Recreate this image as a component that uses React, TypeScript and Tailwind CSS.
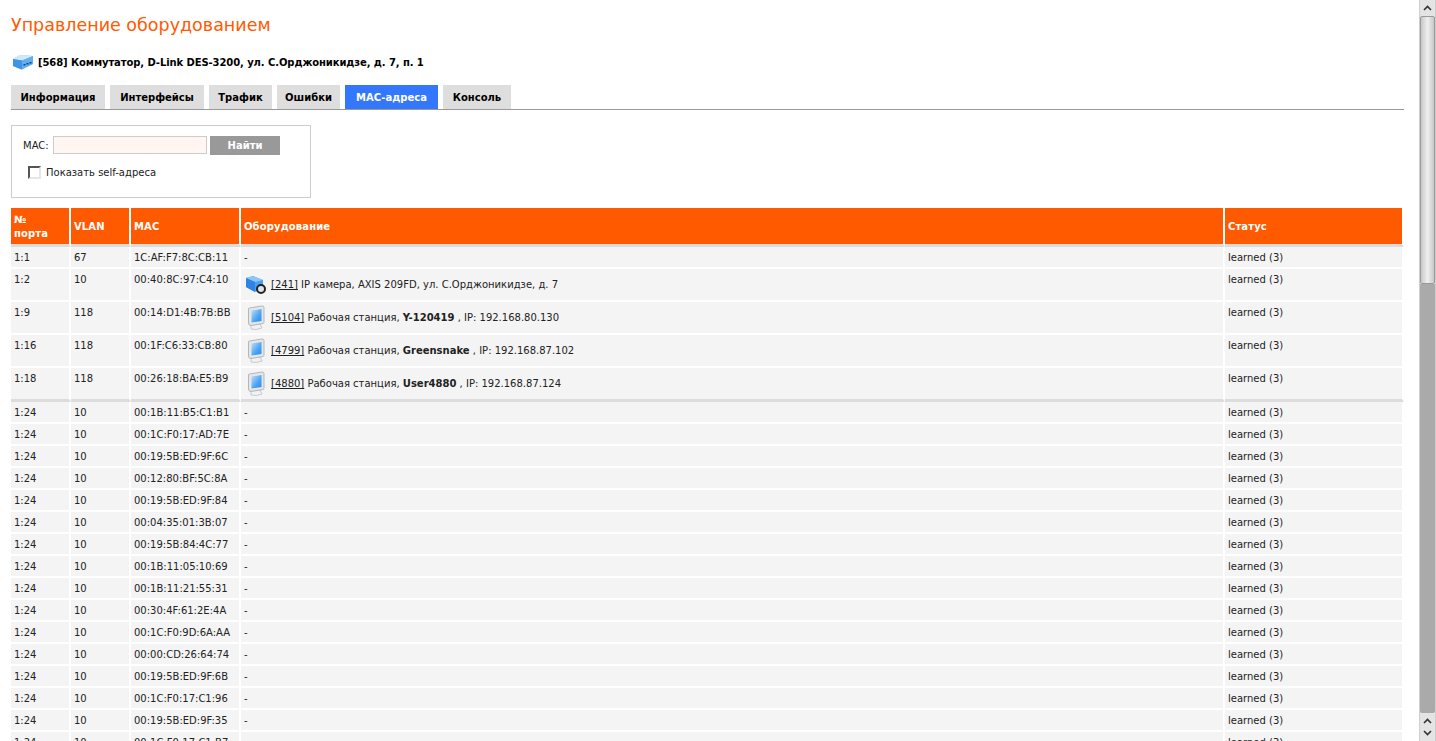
const font = "font-['DejaVu_Sans',sans-serif]"

type Row = { port: string; vlan: string; mac: string; device?: React.ReactNode; icon?: 'camera' | 'monitor'; tall?: boolean; sep?: boolean }

function SwitchIcon() {
  return (
    <svg width="22" height="16" viewBox="0 0 22 16" className="shrink-0">
      <path d="M1 5 L8 1 L21 2 L21 10 L9 15.5 L1 12 Z" fill="#7cc0f5" />
      <path d="M1 5 L8 1 L21 2 L10 6.5 Z" fill="#cfe9fc" />
      <path d="M10 6.5 L21 2 L21 10 L10 15.5 Z" fill="#62aeee" />
      <path d="M1 5 L10 6.5 L10 15.5 L1 12 Z" fill="#3f94e8" />
      <path d="M11.5 10 h2 v1.5 h-2 Z M14.5 9 h2 v1.5 h-2 Z M17.5 8 h2 v1.5 h-2 Z" fill="#1f3f68" />
    </svg>
  )
}

function CameraIcon() {
  return (
    <svg width="22" height="20" viewBox="0 0 22 20" className="shrink-0">
      <path d="M1 3 L8 1 L18 5 L18 13 L10 17 L1 12 Z" fill="#4f9ff0" />
      <path d="M1 3 L8 1 L18 5 L10 7 Z" fill="#8cc6f8" />
      <path d="M1 3 L10 7 L10 17 L1 12 Z" fill="#2f83e4" />
      <circle cx="16" cy="14" r="4" fill="#dfe3e6" stroke="#222" strokeWidth="2" />
    </svg>
  )
}

function MonitorIcon() {
  return (
    <svg width="20" height="26" viewBox="0 0 20 26" className="shrink-0">
      <defs>
        <linearGradient id="screen" x1="0" y1="0" x2="1" y2="1">
          <stop offset="0" stopColor="#bfe0fb" />
          <stop offset="0.6" stopColor="#4aa3f3" />
          <stop offset="1" stopColor="#2f8ae8" />
        </linearGradient>
      </defs>
      <path d="M5 19 L14 19 L16 23 Q10 25.5 5 24 Z" fill="#f0f1f2" stroke="#c8cbcd" />
      <path d="M2.5 4 Q2.5 3 3.5 3 L16 1 Q18 1 18 2.5 L18 17 Q18 18 17 18.5 L5 20.5 Q2.5 20.5 2.5 18 Z" fill="#e4e6e8" stroke="#b3b7ba" />
      <path d="M5.5 5.5 L15.5 4 L15.5 16 L5.5 17.5 Z" fill="url(#screen)" />
    </svg>
  )
}

function Scrollbar() {
  return (
    <div className="flex w-[17px] shrink-0 flex-col border-x border-x-[#cfcfcf] bg-[#e4e4e4]">
      <div className="flex h-[16px] items-center justify-center">
        <svg width="9" height="6" viewBox="0 0 9 6"><path d="M1 5 L4.5 1.5 L8 5" fill="none" stroke="#333" strokeWidth="1.6" /></svg>
      </div>
      <div className="h-[268px] rounded-[2px] border border-[#999] bg-gradient-to-r from-[#c8c8c8] via-[#efefef] to-[#c8c8c8]" />
      <div className="flex-1 rounded-b-[2px] bg-[#aaa]" />
      <div className="flex h-[16px] items-center justify-center">
        <svg width="9" height="6" viewBox="0 0 9 6"><path d="M1 5 L4.5 1.5 L8 5" fill="none" stroke="#333" strokeWidth="1.6" /></svg>
      </div>
      <div className="flex h-[12px] items-center justify-center pb-[4px]">
        <svg width="9" height="6" viewBox="0 0 9 6"><path d="M1 1 L4.5 4.5 L8 1" fill="none" stroke="#333" strokeWidth="1.6" /></svg>
      </div>
    </div>
  )
}

const rows: Row[] = [
  { port: '1:1', vlan: '67', mac: '1C:AF:F7:8C:CB:11' },
  { port: '1:2', vlan: '10', mac: '00:40:8C:97:C4:10', icon: 'camera', tall: true, device: <><u>[241]</u> IP камера, AXIS 209FD, ул. С.Орджоникидзе, д. 7</> },
  { port: '1:9', vlan: '118', mac: '00:14:D1:4B:7B:BB', icon: 'monitor', tall: true, device: <><u>[5104]</u> Рабочая станция, <b>Y-120419</b> , IP: 192.168.80.130</> },
  { port: '1:16', vlan: '118', mac: '00:1F:C6:33:CB:80', icon: 'monitor', tall: true, device: <><u>[4799]</u> Рабочая станция, <b>Greensnake</b> , IP: 192.168.87.102</> },
  { port: '1:18', vlan: '118', mac: '00:26:18:BA:E5:B9', icon: 'monitor', tall: true, sep: true, device: <><u>[4880]</u> Рабочая станция, <b>User4880</b> , IP: 192.168.87.124</> },
  ...[
    '00:1B:11:B5:C1:B1', '00:1C:F0:17:AD:7E', '00:19:5B:ED:9F:6C', '00:12:80:BF:5C:8A',
    '00:19:5B:ED:9F:84', '00:04:35:01:3B:07', '00:19:5B:84:4C:77', '00:1B:11:05:10:69',
    '00:1B:11:21:55:31', '00:30:4F:61:2E:4A', '00:1C:F0:9D:6A:AA', '00:00:CD:26:64:74',
    '00:19:5B:ED:9F:6B', '00:1C:F0:17:C1:96', '00:19:5B:ED:9F:35', '00:1C:F0:17:C1:B7',
  ].map((mac) => ({ port: '1:24', vlan: '10', mac })),
]

const tabs = ['Информация', 'Интерфейсы', 'Трафик', 'Ошибки', 'MAC-адреса', 'Консоль']
const tabWidths = ['w-[94px]', 'w-[94px]', 'w-[63px]', 'w-[63px]', 'w-[93px]', 'w-[68px]']

const thClass = 'border-r-2 border-b-[3px] border-r-white border-b-[#dcdcdc] bg-[#ff5a00] px-[3px] pt-[1px] text-left align-middle font-bold tracking-[0.12px] text-white leading-[14px]'

export default function App() {
  return (
    <div className={`flex h-screen overflow-hidden bg-white text-[10px] text-[#222] ${font}`}>
      <div className="min-w-0 flex-1 overflow-hidden pr-[15px] pl-[11px]">
        <h1 className="pt-[13px] text-[17.5px] leading-[24px] font-normal text-[#ff5a00]">Управление оборудованием</h1>

        <div className="mt-[15px] flex h-[20px] items-center gap-[4px] pl-[1px] font-bold tracking-[-0.09px] text-black">
          <SwitchIcon />
          <span>[568] Коммутатор, D-Link DES-3200, ул. С.Орджоникидзе, д. 7, п. 1</span>
        </div>

        <div className="mt-[13px] flex h-[25px] gap-[5px] border-b border-[#999]">
          {tabs.map((t, i) => (
            <div key={t} className={`flex h-[24px] items-center justify-center font-bold ${tabWidths[i]} ${t === 'MAC-адреса' ? 'bg-[#3377ff] text-white' : 'bg-[#dedede] text-black'}`}>
              {t}
            </div>
          ))}
        </div>

        <div className="mt-[15px] h-[73px] w-[300px] border border-[#ccc] pt-[10px] pl-[11px]">
          <div className="flex items-start">
            <label className="flex h-[19px] w-[30px] items-center">MAC:</label>
            <input className="h-[18px] w-[154px] border border-[#ccc] bg-[#fff6f2]" />
            <button type="button" className="ml-[3px] h-[19px] w-[70px] bg-[#999] font-bold text-white">Найти</button>
          </div>
          <div className="mt-[10px] ml-[5px] flex items-center gap-[5px]">
            <span className="h-[13px] w-[13px] border-2 border-t-[#555] border-r-[#e6e6e6] border-b-[#e6e6e6] border-l-[#555] bg-white" />
            <span>Показать self-адреса</span>
          </div>
        </div>

        <table className="mt-[10px] w-[1393px] table-fixed border-separate border-spacing-0">
          <colgroup>
            <col className="w-[60px]" />
            <col className="w-[60px]" />
            <col className="w-[110px]" />
            <col />
            <col className="w-[179px]" />
          </colgroup>
          <thead>
            <tr className="h-[39px]">
              <th className={thClass}>№<br />порта</th>
              <th className={thClass}>VLAN</th>
              <th className={thClass}>MAC</th>
              <th className={thClass}>Оборудование</th>
              <th className={thClass}>Статус</th>
            </tr>
          </thead>
          <tbody>
            {rows.map((r) => {
              const cell = `border-r-2 border-r-white ${r.sep ? 'border-b-[3px] border-b-[#dcdcdc]' : 'border-b-2 border-b-white'} bg-[#f4f4f4] px-[3px]`
              const text = 'pt-[4px] align-top leading-[13px]'
              return (
                <tr key={r.mac} className={r.sep ? 'h-[34px]' : r.tall ? 'h-[33px]' : 'h-[22px]'}>
                  <td className={`${cell} ${text}`}>{r.port}</td>
                  <td className={`${cell} ${text}`}>{r.vlan}</td>
                  <td className={`${cell} ${text}`}>{r.mac}</td>
                  <td className={`${cell} ${r.icon ? 'align-middle' : text}`}>
                    {r.icon ? (
                      <div className="flex items-center gap-[3px]">
                        <div className="flex w-[24px] justify-center">
                          {r.icon === 'camera' ? <CameraIcon /> : <MonitorIcon />}
                        </div>
                        <span>{r.device}</span>
                      </div>
                    ) : '-'}
                  </td>
                  <td className={`${cell} ${text}`}>learned (3)</td>
                </tr>
              )
            })}
          </tbody>
        </table>
      </div>
      <Scrollbar />
    </div>
  )
}
